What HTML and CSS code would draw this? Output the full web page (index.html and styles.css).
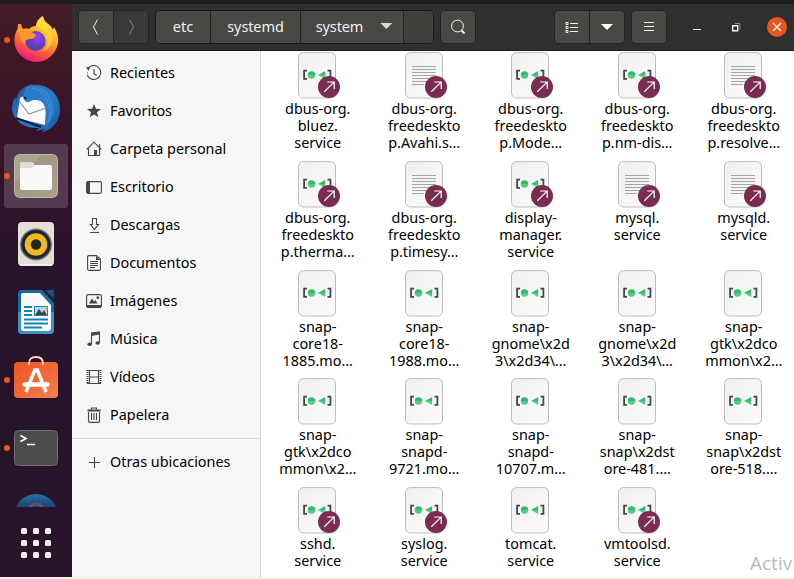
FILE: index.html
```html
<!DOCTYPE html>
<html lang="es">
<head>
<meta charset="utf-8">
<title>system</title>
<link rel="stylesheet" href="styles.css">
</head>
<body>
<svg class="defs" width="0" height="0">
  <defs>
    <linearGradient id="paper" x1="0" y1="0" x2="1" y2="1"><stop offset="0" stop-color="#f0f0f0"/><stop offset="1" stop-color="#fbfbfb"/></linearGradient>
    <linearGradient id="green" x1="0" y1="0" x2="0" y2="1"><stop offset=".5" stop-color="#2fbb68"/><stop offset=".5" stop-color="#54cb82"/></linearGradient>
    <symbol id="sheet" viewBox="0 0 44 47"><rect x="1.5" y=".6" width="37" height="45.4" rx="5" fill="url(#paper)" stroke="#bcbcbc"/></symbol>
    <symbol id="unit" viewBox="0 0 44 47"><use href="#sheet"/><path d="M10 18.7H7.1v8.2H10M30.500 18.700h2.900v8.200h-2.900" fill="none" stroke="#47454e" stroke-width="1.800"/><circle cx="14.500" cy="23" r="3.700" fill="url(#green)"/><path d="M28.200 19v8L21 23z" fill="url(#green)"/></symbol>
    <symbol id="text" viewBox="0 0 44 47"><use href="#sheet"/><path d="M8 14.500h24M8 17.500h24M8 20.500h24M8 23.500h24M8 26.500h24M8 29.500h24M8 32.500h12" stroke="#a4a4a4"/></symbol>
    <symbol id="link" viewBox="0 0 22 22"><circle cx="11" cy="11" r="11" fill="#7a2b50"/><path d="M6.300 15.800L15.800 6.400M9.200 6h7v7" fill="none" stroke="#fff" stroke-width="1.200"/></symbol>
  </defs>
</svg>
<div class="topbar"></div>
<div class="desktop">
  <nav class="dock">
    <div class="app running"><svg width="48" height="48" viewBox="0 0 48 48">
      <defs><linearGradient id="fx" x1=".75" y1="0" x2=".3" y2="1"><stop offset="0" stop-color="#fff04a"/><stop offset=".4" stop-color="#ffae25"/><stop offset=".72" stop-color="#ff533d"/><stop offset="1" stop-color="#e9108c"/></linearGradient><radialGradient id="fxb" cx=".6" cy=".3"><stop offset="0" stop-color="#a33cf4"/><stop offset="1" stop-color="#563fb7"/></radialGradient></defs>
      <path d="M2.500 22C3.500 15 6 12 9 8q0 3 2 5 3-1 6 0c2-2 4-3 7-3C24 6 27 2 31 0q1 5 4 7c3 2 5 4 6 7l1-3q5 8 4 16c-2 12-12 19-22 19S1 37 2.500 22z" fill="url(#fx)"/>
      <path d="M31 1q-7 5-6 11c6 1 10 6 10 12s-2 9-6 12c9-2 14-11 10-19-3-6-7-8-8-16z" fill="#ffe03d" opacity=".6"/>
      <circle cx="23.500" cy="25" r="10" fill="url(#fxb)"/>
      <path d="M9 8q0 3 2 5 3-1 6 0c3 5 7 5 7 6-1 3-3 4-7 4-4 1-5 3-4 6q-5-4-5-10-3-4-2-11z" fill="#ff9632"/></svg></div>
    <div class="app"><svg width="48" height="48" viewBox="0 0 48 48">
      <defs><linearGradient id="tb" x1="0" y1="0" x2="1" y2="1"><stop offset="0" stop-color="#1c5095"/><stop offset=".5" stop-color="#2b7dcd"/><stop offset="1" stop-color="#1b59aa"/></linearGradient></defs>
      <path d="M15 2l4-2 2 1C34-1 48 9 48 25c0 12-8 22-19 23l4-3-9 2 3-3C13 45 2 37 0 26c0-6 1-10 3-13l1 3C6 8 10 4 15 2z" fill="url(#tb)"/>
      <path d="M8 14q3-3 5 1l16 1 5 7-1 18-28-7z" fill="#fafafa"/><path d="M7 17l10 13 17-6" fill="none" stroke="#929292" stroke-width="1.200"/>
      <path d="M4 34l25 9" stroke="#0e1c38" stroke-width="2"/>
      <path d="M14 3c12-4 23 2 27 13 3 8 1 17-7 28-1-7 1-14-1-20-1-6-5-8-10-8s-5 3-8 2c-4-1-4-9-1-15z" fill="#2c7ccb"/><path d="M20 4c10 2 15 9 17 19M28 4c11 7 14 19 8 34" fill="none" stroke="#56a3df" opacity=".6"/><circle cx="13" cy="14" r="1.500" fill="#102841"/></svg></div>
    <div class="app running active"><svg width="48" height="48" viewBox="0 0 48 48">
      <defs><linearGradient id="fd" x1="0" y1="0" x2="1" y2="1"><stop offset=".32" stop-color="#aaa491"/><stop offset=".33" stop-color="#9d9784"/><stop offset="1" stop-color="#a8a28f"/></linearGradient></defs>
      <rect x="2.500" y="2.500" width="43" height="43" rx="5" fill="url(#fd)" stroke="#bcb6a5"/><path d="M8 23V12q0-2 2-2h9q2 0 3 2l2 3v8z" fill="#e1ddd4"/><path d="M8 16h11q2 0 3-2l1-1h15q2 0 2 2v21q0 2-2 2H10q-2 0-2-2z" fill="#faf9f7"/></svg></div>
    <div class="app"><svg width="48" height="48" viewBox="0 0 48 48">
      <rect x="6" y="2" width="36" height="44" rx="4" fill="#e3dfd5"/><path d="M8 45h32" stroke="#fff"/><circle cx="24" cy="24.500" r="16" fill="#74767e"/><circle cx="24" cy="24.500" r="14.600" fill="#20222d"/><circle cx="24" cy="24.500" r="11.300" fill="#edbb20"/><circle cx="24" cy="24.500" r="5.200" fill="#242424"/></svg></div>
    <div class="app"><svg width="48" height="48" viewBox="0 0 48 48">
      <path d="M10 2h20l12 13v27q0 4-4 4H10q-4 0-4-4V6q0-4 4-4z" fill="#176c9f"/><path d="M6 24h36v18q0 4-4 4H10q-4 0-4-4z" fill="#3d94c2"/><path d="M11 5h17l11 12v23q0 3-3 3H12q-3 0-3-3V7q0-2 2-2z" fill="#fafafa"/><path d="M33 2h9v9z" fill="#15557d"/><path d="M12 19h8M12 23h8M12 27h8M12 31.500h24M12 35.500h24M12 39.500h18" stroke="#1582b9" stroke-width="2"/><path fill="#1687be" d="M22 18h14v10H22z"/><path fill="#b6ddeb" d="M23 19h12v8H23z"/><path d="M23 27l4-6 3 4 2-3 3 5z" fill="#444"/><circle cx="34" cy="20" r="1.500" fill="#f3c21e"/></svg></div>
    <div class="app running"><svg width="48" height="48" viewBox="0 0 48 48">
      <defs><linearGradient id="sw" x1="0" y1="0" x2="1" y2="1"><stop offset="0" stop-color="#ee5420"/><stop offset=".5" stop-color="#ef6836"/><stop offset="1" stop-color="#f28053"/></linearGradient></defs>
      <rect x="2" y="6" width="44" height="36" rx="4" fill="url(#sw)"/><path d="M17 9V7.500q0-6.500 7-6.500t7 6.500V9" fill="none" stroke="#fadab7" stroke-width="1.800"/><path d="M14 36l8.700-22h2.600L34 36" fill="none" stroke="#fff" stroke-width="3.600"/><path d="M12.500 28.500h23" stroke="#fff" stroke-width="4.500" stroke-linecap="round"/></svg></div>
    <div class="app running"><svg width="48" height="48" viewBox="0 0 48 48">
      <rect x="2.500" y="6.500" width="43" height="35" rx="4" fill="#4b4b4b" stroke="#707070"/><path d="M8.500 11.500l5.500 3-5.500 3M15 20.500h8" fill="none" stroke="#fff" stroke-width="1.700"/></svg></div>
    <div class="peek"><svg width="48" height="24" viewBox="0 0 48 24">
      <defs><linearGradient id="hp" x1="0" y1="0" x2="0" y2="1"><stop offset="0" stop-color="#286da7"/><stop offset=".35" stop-color="#174065"/></linearGradient></defs>
      <circle cx="24" cy="23" r="22" fill="url(#hp)"/><path d="M18 14q6-6 13 0" fill="none" stroke="#5f5668" stroke-width="3"/></svg></div>
    <div class="grid-button"><i></i><i></i><i></i><i></i><i></i><i></i><i></i><i></i><i></i></div>
  </nav>
  <main class="window">
    <header>
      <div class="group nav"><button aria-label="Atrás"><svg width="12" height="18"><path d="M7.500 1.500L3.500 9l4 7.500" /></svg></button><button class="off" aria-label="Adelante"><svg width="12" height="18"><path d="M4.500 1.500L8.500 9l-4 7.500"/></svg></button></div>
      <div class="group path"><button class="p1">etc</button><button class="p2">systemd</button><button class="p3">system<span class="caret"></span></button><button class="p4" aria-label="Ruta"></button></div>
      <button class="single search" aria-label="Buscar"><svg width="16" height="16"><circle cx="7.500" cy="7" r="5.900"/><path d="M11.500 11.500l3 3" stroke-width="2"/></svg></button>
      <div class="group view"><button aria-label="Lista"><svg width="14" height="13"><path d="M1 1.500h2v2H1zM1 5.500h2v2H1zM1 9.500h2v2H1zM5 2.500h8M5 6.500h8M5 10.500h8"/></svg></button><button aria-label="Vista"><span class="caret white"></span></button></div>
      <button class="single" aria-label="Menú"><svg width="12" height="12"><path d="M1 1.500h10M1 5.500h10M1 9.500h10"/></svg></button>
      <div class="controls"><svg class="min" width="8" height="8"><path d="M0 6.500h8"/></svg><svg class="max" width="9" height="9"><path d="M.7 2.700h5v5h-5z" stroke-width="1.400"/><path d="M3 .5h5v6" stroke="#888"/></svg><span class="close"><svg width="10" height="10"><path d="M1 1l8 8M9 1L1 9" stroke-width="1.500"/></svg></span></div>
    </header>
    <div class="body">
      <aside>
        <div class="place"><svg viewBox="0 0 16 16"><path d="M2.200 3.200A7 7 0 1 1 1.200 10" class="s"/><path d="M1 8h1M8 4v4.500l2.500 2" class="s"/><path d="M0 2l4 .2L2.500 6z"/></svg><span>Recientes</span></div>
        <div class="place"><svg viewBox="0 0 16 16"><path d="M8 1l1.900 4.800 5.100.3-4 3.200 1.400 5L8 11.400l-4.400 2.900L5 9.300 1 6.100l5.100-.3z"/></svg><span>Favoritos</span></div>
        <div class="place"><svg viewBox="0 0 16 16"><path d="M.7 8.500L8 1.200l7.300 7.300M2.500 7v7.500h11V7M13.500 6V3" class="s"/><path d="M8 9h3v6H8z"/></svg><span>Carpeta personal</span></div>
        <div class="place"><svg viewBox="0 0 16 16"><rect x=".6" y="2.600" width="14.800" height="11.800" rx="1.500" class="s"/><path d="M1 2h3v13H1z"/></svg><span>Escritorio</span></div>
        <div class="place"><svg viewBox="0 0 16 16"><path d="M6.500 1.500h4v6h2l-4 5-4-5h2zM4 15.500h9" class="s"/></svg><span>Descargas</span></div>
        <div class="place"><svg viewBox="0 0 16 16"><path d="M3 .6h7.500L14.400 4v10q0 1.400-1.400 1.400H3q-1.400 0-1.400-1.400V2Q1.600.6 3 .6zM4 6.500h8M4 8.500h8M4 10.500h8M4 12.500h5" class="s"/><path d="M10 1l4 4h-4z"/></svg><span>Documentos</span></div>
        <div class="place"><svg viewBox="0 0 16 16"><rect x=".6" y="1.600" width="14.800" height="12.800" rx="1.500" class="s"/><path d="M1 12h14v3H1zM3 10.500l3-5 2 3 1.500-1.500 2 3.500z"/><circle cx="11.800" cy="4.700" r="1.400"/></svg><span>Imágenes</span></div>
        <div class="place"><svg viewBox="0 0 16 16"><path d="M5.500 13V2l8-1v10.500" class="s"/><path d="M5 2l9-1.500v3L5 5z"/><ellipse cx="3.700" cy="13.300" rx="2.300" ry="1.800"/><ellipse cx="11.700" cy="12" rx="2.300" ry="1.800"/></svg><span>Música</span></div>
        <div class="place"><svg viewBox="0 0 16 16"><path d="M3.500 1.500h9v13h-9zM3.500 8h9" class="s"/><path d="M1.500 1v14M14.500 1v14" class="s film"/><path d="M1 1.500h14M1 14.500h14" class="s"/></svg><span>Vídeos</span></div>
        <div class="place"><svg viewBox="0 0 16 16"><path d="M2.500 5v9q0 1.400 1.400 1.400h8.200q1.400 0 1.400-1.400V5M5.500 6v7M8 6v7M10.500 6v7M5.500 3V1h5v2" class="s"/><path d="M1.500 2.500h13v2h-13z"/></svg><span>Papelera</span></div>
        <hr>
        <div class="place"><svg viewBox="0 0 16 16"><path d="M8.500 3v11M3 8.500h11" class="s"/></svg><span>Otras ubicaciones</span></div>
      </aside>
      <section class="files">
        <figure class="f"><div class="icon"><svg class="doc"><use href="#unit"/></svg><svg class="badge"><use href="#link"/></svg></div><figcaption>dbus-org.<br>bluez.<br>service</figcaption></figure>
        <figure class="f"><div class="icon"><svg class="doc"><use href="#text"/></svg><svg class="badge"><use href="#link"/></svg></div><figcaption>dbus-org.<br>freedeskto<br>p.Avahi.s…</figcaption></figure>
        <figure class="f"><div class="icon"><svg class="doc"><use href="#unit"/></svg><svg class="badge"><use href="#link"/></svg></div><figcaption>dbus-org.<br>freedeskto<br>p.Mode…</figcaption></figure>
        <figure class="f"><div class="icon"><svg class="doc"><use href="#unit"/></svg><svg class="badge"><use href="#link"/></svg></div><figcaption>dbus-org.<br>freedeskto<br>p.nm-dis…</figcaption></figure>
        <figure class="f"><div class="icon"><svg class="doc"><use href="#text"/></svg><svg class="badge"><use href="#link"/></svg></div><figcaption>dbus-org.<br>freedeskto<br>p.resolve…</figcaption></figure>
        <figure class="f"><div class="icon"><svg class="doc"><use href="#unit"/></svg><svg class="badge"><use href="#link"/></svg></div><figcaption>dbus-org.<br>freedeskto<br>p.therma…</figcaption></figure>
        <figure class="f"><div class="icon"><svg class="doc"><use href="#text"/></svg><svg class="badge"><use href="#link"/></svg></div><figcaption>dbus-org.<br>freedeskto<br>p.timesy…</figcaption></figure>
        <figure class="f"><div class="icon"><svg class="doc"><use href="#unit"/></svg><svg class="badge"><use href="#link"/></svg></div><figcaption>display-<br>manager.<br>service</figcaption></figure>
        <figure class="f"><div class="icon"><svg class="doc"><use href="#text"/></svg><svg class="badge"><use href="#link"/></svg></div><figcaption>mysql.<br>service</figcaption></figure>
        <figure class="f"><div class="icon"><svg class="doc"><use href="#text"/></svg><svg class="badge"><use href="#link"/></svg></div><figcaption>mysqld.<br>service</figcaption></figure>
        <figure class="f"><div class="icon"><svg class="doc"><use href="#unit"/></svg></div><figcaption>snap-<br>core18-<br>1885.mo…</figcaption></figure>
        <figure class="f"><div class="icon"><svg class="doc"><use href="#unit"/></svg></div><figcaption>snap-<br>core18-<br>1988.mo…</figcaption></figure>
        <figure class="f"><div class="icon"><svg class="doc"><use href="#unit"/></svg></div><figcaption>snap-<br>gnome\x2d<br>3\x2d34\…</figcaption></figure>
        <figure class="f"><div class="icon"><svg class="doc"><use href="#unit"/></svg></div><figcaption>snap-<br>gnome\x2d<br>3\x2d34\…</figcaption></figure>
        <figure class="f"><div class="icon"><svg class="doc"><use href="#unit"/></svg></div><figcaption>snap-<br>gtk\x2dco<br>mmon\x2…</figcaption></figure>
        <figure class="f"><div class="icon"><svg class="doc"><use href="#unit"/></svg></div><figcaption>snap-<br>gtk\x2dco<br>mmon\x2…</figcaption></figure>
        <figure class="f"><div class="icon"><svg class="doc"><use href="#unit"/></svg></div><figcaption>snap-<br>snapd-<br>9721.mo…</figcaption></figure>
        <figure class="f"><div class="icon"><svg class="doc"><use href="#unit"/></svg></div><figcaption>snap-<br>snapd-<br>10707.m…</figcaption></figure>
        <figure class="f"><div class="icon"><svg class="doc"><use href="#unit"/></svg></div><figcaption>snap-<br>snap\x2dst<br>ore-481.…</figcaption></figure>
        <figure class="f"><div class="icon"><svg class="doc"><use href="#unit"/></svg></div><figcaption>snap-<br>snap\x2dst<br>ore-518.…</figcaption></figure>
        <figure class="f"><div class="icon"><svg class="doc"><use href="#unit"/></svg><svg class="badge"><use href="#link"/></svg></div><figcaption>sshd.<br>service</figcaption></figure>
        <figure class="f"><div class="icon"><svg class="doc"><use href="#unit"/></svg><svg class="badge"><use href="#link"/></svg></div><figcaption>syslog.<br>service</figcaption></figure>
        <figure class="f"><div class="icon"><svg class="doc"><use href="#unit"/></svg></div><figcaption>tomcat.<br>service</figcaption></figure>
        <figure class="f"><div class="icon"><svg class="doc"><use href="#unit"/></svg><svg class="badge"><use href="#link"/></svg></div><figcaption>vmtoolsd.<br>service</figcaption></figure>
      </section>
    </div>
  </main>
</div>
<div class="watermark">Activ</div>
</body>
</html>
```
FILE: styles.css
```css
* { box-sizing: border-box; }
body { margin: 0; width: 794px; height: 579px; overflow: hidden; position: relative; background: #f0f0f0; font: 14px/17px "Noto Sans", "Open Sans", sans-serif; color: #000; }
.defs { position: absolute; }
svg { display: block; flex: none; }
.topbar { height: 4px; background: #1d1d1d; }
.desktop { display: flex; height: 573px; }
.dock { width: 72px; flex: none; padding: 4px 4px 0; display: flex; flex-direction: column; gap: 4px; background: linear-gradient(#451b26, #351227 25%, #28132d 48%, #26142b 75%, #28152a); }
.app { width: 64px; height: 64px; flex: none; display: flex; align-items: center; justify-content: center; position: relative; border-radius: 3px; }
.active { background: #55394f; }
.running::before { content: ""; position: absolute; left: 0; top: 29px; width: 6px; height: 6px; border-radius: 50%; background: #e95420; }
.peek { height: 23px; padding: 9px 8px 0; overflow: hidden; }
.grid-button { display: grid; grid-template-columns: repeat(3, 6px); gap: 6px; justify-content: center; padding-top: 17px; }
.grid-button i { height: 6px; border-radius: 1.5px; background: #f1f0ef; }
.window { flex: 1; min-width: 0; display: flex; flex-direction: column; }
header { height: 47px; flex: none; background: #302e2f; border-bottom: 1px solid #1b1b1b; display: flex; align-items: flex-start; padding: 6px 7px 0 6px; }
header svg { fill: none; stroke: #f4f4f4; }
button { font: 14.5px/17px "Noto Sans", sans-serif; color: #f1f1ef; margin: 0; padding: 0; border: 0; background: #494845; display: flex; align-items: center; justify-content: center; }
.group { display: flex; height: 34px; border: 1px solid #242323; border-radius: 5px; overflow: hidden; }
.group button + button { border-left: 1px solid #242323; }
.nav { width: 71px; margin-right: 6px; }
.nav button { flex: 1; }
.nav .off { background: #3a3939; }
.off svg { stroke: #858585; }
.path { width: 279px; border-color: #181818; margin-right: 6px; }
.path button { padding-bottom: 2px; }
.path .p1 { width: 54px; }
.path .p2 { width: 90px; letter-spacing: -0.1px; }
.path .p3 { width: 103px; gap: 17px; padding-left: 4px; letter-spacing: -0.1px; }
.path .p4 { flex: 1; background: #41403d; }
.single { width: 36px; height: 34px; border: 1px solid #242323; border-radius: 5px; }
.search { margin-right: 78px; }
.view { width: 71px; margin-right: 6px; }
.view button { flex: 1; }
.caret { width: 12px; height: 6px; background: #dadad8; clip-path: polygon(0 0, 100% 0, 50% 100%); }
.white { background: #fff; }
.controls { flex: 1; display: flex; align-items: center; justify-content: flex-end; height: 34px; }
.min { margin: 0 31px 0 0; }
.max { margin: 0 26px 0 0; }
.close { width: 20px; height: 20px; border-radius: 50%; background: #e95420; display: flex; align-items: center; justify-content: center; }
.body { flex: 1; min-height: 0; display: flex; }
aside { width: 189px; flex: none; background: #f6f6f6; border-right: 1px solid #d6d6d6; padding-top: 3px; }
.place { height: 38px; display: flex; align-items: center; gap: 8px; padding-left: 14px; font-size: 14.4px; white-space: nowrap; }
.place span { padding-bottom: 2px; }
.place svg { width: 16px; height: 16px; fill: #464646; }
.place .s { fill: none; stroke: #464646; stroke-width: 1.1; }
.place .film { stroke-width: 2; stroke-dasharray: 1 1; }
hr { margin: 4px 0; border: 0; height: 1px; background: #d9d9d9; }
.files { flex: 1; background: #fff; padding: 1px 0 0 3px; display: grid; grid-template-columns: repeat(5, 106.5px); grid-auto-rows: 108.75px; overflow: hidden; }
.f { margin: 0; display: flex; flex-direction: column; align-items: center; }
.icon { position: relative; width: 40px; height: 48px; flex: none; }
.doc { width: 44px; height: 47px; }
.badge { position: absolute; left: 21px; top: 24px; width: 22px; height: 22px; }
figcaption { text-align: center; white-space: nowrap; font-size: 14.4px; padding-left: 1px; }
.watermark { position: absolute; left: 750px; top: 551px; font: 19px/24px "Open Sans", sans-serif; color: #b9b9b9; }
```
